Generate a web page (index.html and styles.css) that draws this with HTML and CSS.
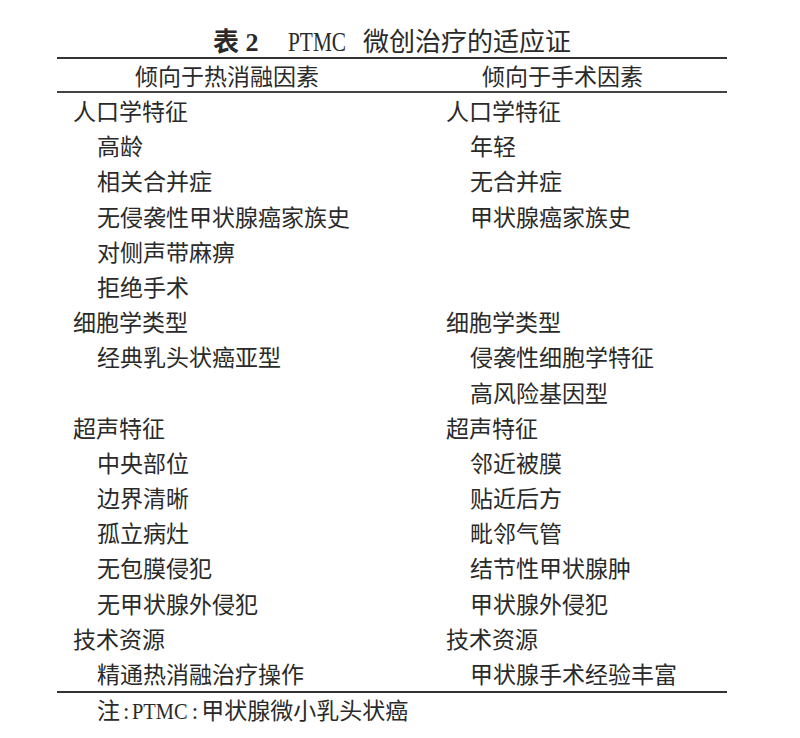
FILE: index.html
```html
<!DOCTYPE html>
<html lang="zh-CN">
<head>
<meta charset="utf-8">
<title>表 2 PTMC 微创治疗的适应证</title>
<link rel="stylesheet" href="styles.css">
</head>
<body>
<div class="page">
  <div class="title"><span class="tab-no">表 2</span><span class="lat">PTMC</span><span class="cjk">微创治疗的适应证</span></div>
  <div class="table">
    <div class="head left-head">倾向于热消融因素</div>
    <div class="head right-head">倾向于手术因素</div>

    <div class="cell cat">人口学特征</div><div class="cell cat r">人口学特征</div>
    <div class="cell sub">高龄</div><div class="cell sub r">年轻</div>
    <div class="cell sub">相关合并症</div><div class="cell sub r">无合并症</div>
    <div class="cell sub">无侵袭性甲状腺癌家族史</div><div class="cell sub r">甲状腺癌家族史</div>
    <div class="cell sub">对侧声带麻痹</div><div class="cell sub r"></div>
    <div class="cell sub">拒绝手术</div><div class="cell sub r"></div>
    <div class="cell cat">细胞学类型</div><div class="cell cat r">细胞学类型</div>
    <div class="cell sub">经典乳头状癌亚型</div><div class="cell sub r">侵袭性细胞学特征</div>
    <div class="cell sub"></div><div class="cell sub r">高风险基因型</div>
    <div class="cell cat">超声特征</div><div class="cell cat r">超声特征</div>
    <div class="cell sub">中央部位</div><div class="cell sub r">邻近被膜</div>
    <div class="cell sub">边界清晰</div><div class="cell sub r">贴近后方</div>
    <div class="cell sub">孤立病灶</div><div class="cell sub r">毗邻气管</div>
    <div class="cell sub">无包膜侵犯</div><div class="cell sub r">结节性甲状腺肿</div>
    <div class="cell sub">无甲状腺外侵犯</div><div class="cell sub r">甲状腺外侵犯</div>
    <div class="cell cat">技术资源</div><div class="cell cat r">技术资源</div>
    <div class="cell sub">精通热消融治疗操作</div><div class="cell sub r">甲状腺手术经验丰富</div>
  </div>
  <div class="note">注<span class="colon">:</span><span class="lat-n">PTMC</span><span class="colon">:</span>甲状腺微小乳头状癌</div>
</div>
</body>
</html>
```

FILE: styles.css
```css
html, body {
  margin: 0;
  padding: 0;
  background: #ffffff;
}

body {
  font-family: "Liberation Serif", "Noto Sans CJK SC", serif;
  color: #2a2a2a;
}

.page {
  width: 670px;
  margin-left: 57px;
  padding-top: 22px;
}

.title {
  height: 35px;
  line-height: 35px;
  font-size: 26px;
  text-align: center;
  white-space: nowrap;
}

.tab-no {
  font-weight: bold;
  font-family: "Liberation Serif", "Noto Sans CJK SC", serif;
}

.title .lat {
  display: inline-block;
  font-size: 27px;
  margin-left: 30px;
  margin-right: -15px;
  transform: scaleX(0.79);
  transform-origin: left center;
}

.title .cjk {
  margin-left: 16px;
  font-family: "Noto Sans CJK SC", sans-serif;
  font-weight: 400;
}

.table {
  display: grid;
  grid-template-columns: 373px 297px;
  border-top: 2px solid #333;
  border-bottom: 2px solid #333;
  font-family: "Noto Sans CJK SC", sans-serif;
  font-size: 23px;
}

.head {
  height: 32px;
  line-height: 32px;
  border-bottom: 2px solid #444;
  white-space: nowrap;
}

.left-head {
  padding-left: 78px;
}

.right-head {
  padding-left: 52px;
}

.cell {
  height: 35.2px;
  line-height: 35.2px;
  white-space: nowrap;
}

.cat {
  padding-left: 16px;
}

.sub {
  padding-left: 40px;
}

.note {
  height: 32px;
  line-height: 32px;
  padding-left: 40px;
  font-family: "Noto Sans CJK SC", sans-serif;
  font-size: 23px;
  white-space: nowrap;
}

.note .colon {
  font-family: "Liberation Serif", serif;
  margin: 0 3px;
}

.note .lat-n {
  display: inline-block;
  font-family: "Liberation Serif", serif;
  font-size: 24px;
  margin-right: -9px;
  transform: scaleX(0.85);
  transform-origin: left center;
}
```
